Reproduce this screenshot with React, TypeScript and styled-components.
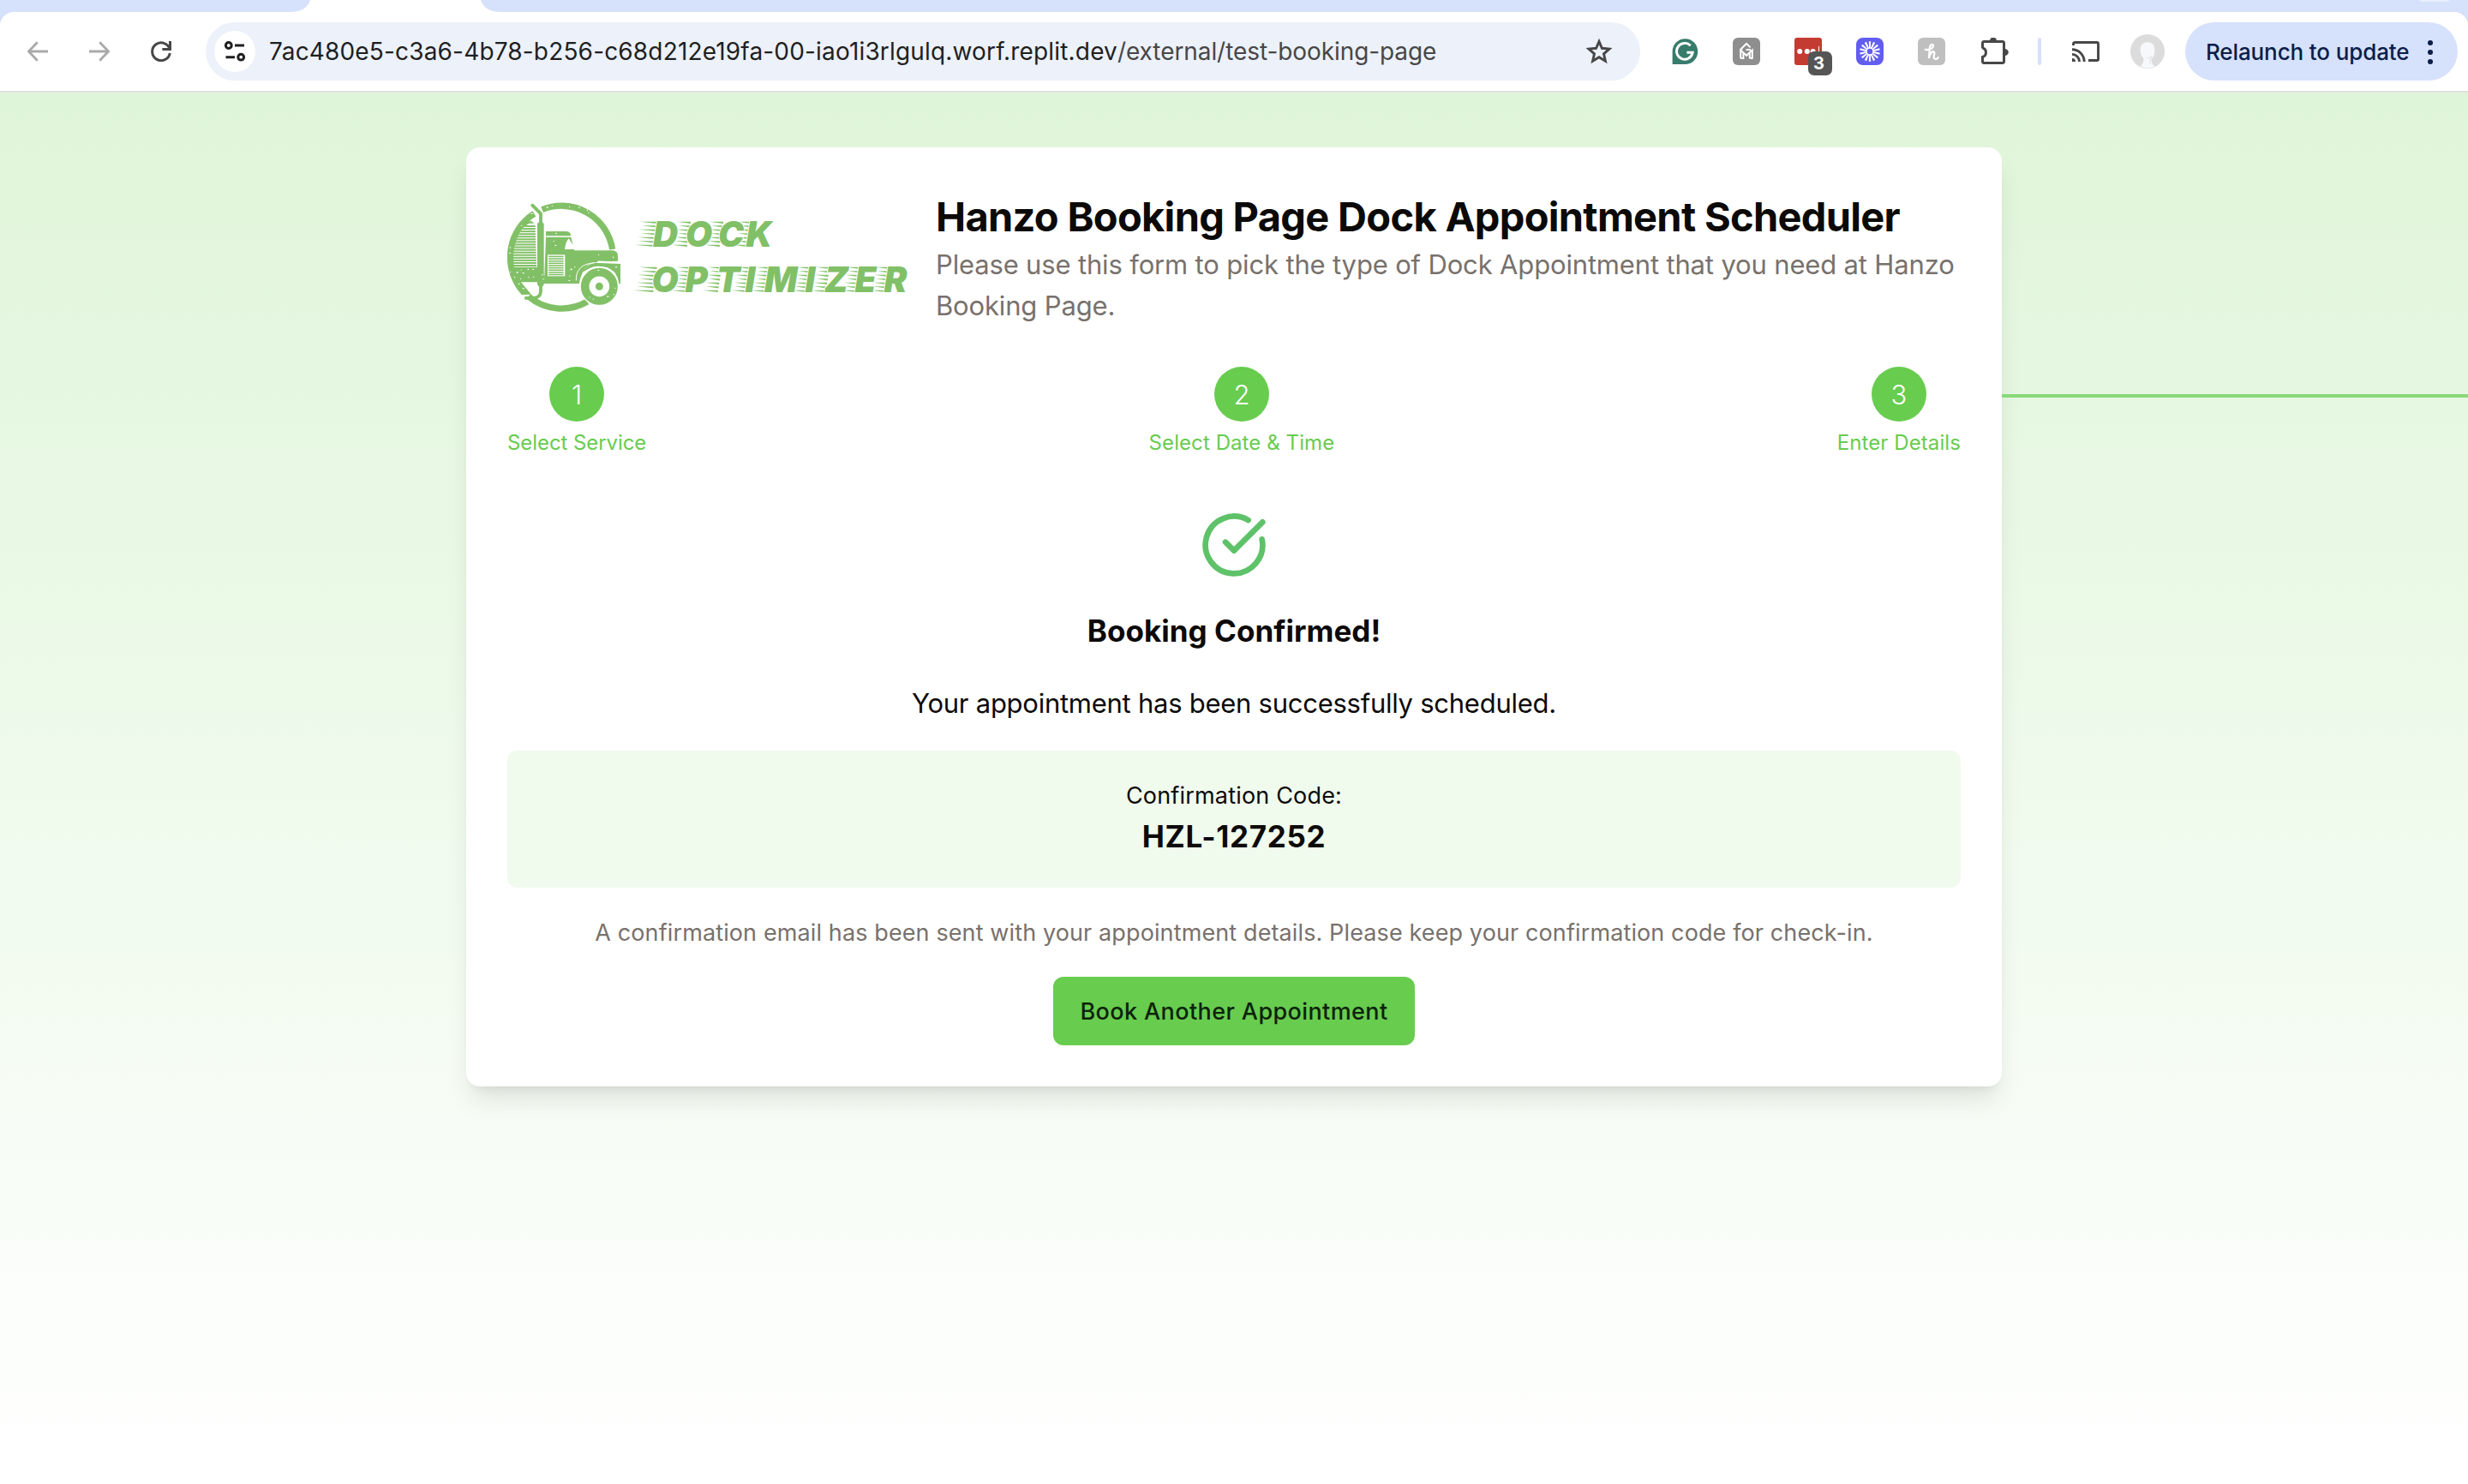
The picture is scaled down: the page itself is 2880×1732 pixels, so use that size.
import React from 'react';
import styled, { createGlobalStyle } from 'styled-components';

const GlobalStyle = createGlobalStyle`
  *, *::before, *::after { box-sizing: border-box; }
  html, body { margin: 0; padding: 0; }
  body { font-family: Inter, "Liberation Sans", sans-serif; background: #fff; }
  h1, h2, p { margin: 0; }
  svg { display: block; flex: none; }
`;

const Window = styled.div`
  width: 2880px;
  height: 1732px;
  display: flex;
  flex-direction: column;
  overflow: hidden;
`;

/* ---------- browser chrome ---------- */

const TabStrip = styled.div`
  height: 14px;
  flex: none;
  display: flex;
  justify-content: space-between;
  background: #d6e1fb;
  padding: 0 22px 0 340px;
`;

const TabSearch = styled.div`
  width: 34px;
  height: 2px;
  border-radius: 0 0 8px 8px;
  background: #e9effd;
`;

const ToolbarFrame = styled.div`
  flex: none;
  background: #d6e1fb;
`;

const Toolbar = styled.div`
  height: 94px;
  display: flex;
  align-items: center;
  background: #fff;
  border-radius: 16px 16px 0 0;
  border-bottom: 2px solid #dfe1df;
  padding: 0 12px 0 32px;
`;

const NavButtons = styled.div`
  display: flex;
  align-items: center;
  gap: 48px;
  width: 208px;
`;

const AddressBar = styled.div`
  width: 1674px;
  height: 68px;
  display: flex;
  align-items: center;
  background: #ecf1fa;
  border-radius: 34px;
  padding: 0 32px 0 10px;
`;

const SiteInfo = styled.div`
  width: 48px;
  height: 48px;
  border-radius: 50%;
  background: #fff;
  display: flex;
  align-items: center;
  justify-content: center;
`;

const Url = styled.div`
  flex: 1;
  margin-left: 16px;
  font-size: 28px;
  line-height: 40px;
  letter-spacing: -0.08px;
  color: #474747;
  white-space: nowrap;
`;

const Host = styled.span`
  color: #1f1f1f;
  letter-spacing: 0.165px;
`;

const Extensions = styled.div`
  display: flex;
  align-items: center;
  gap: 40px;
  margin-left: 36px;
`;

const ExtensionSlot = styled.div`
  position: relative;
  width: 32px;
  height: 32px;

  &:last-child {
    margin-left: 2px;
  }
`;

const CountBadge = styled.span`
  position: absolute;
  left: 16px;
  top: 16px;
  width: 28px;
  height: 28px;
  border-radius: 7px;
  background: #555;
  color: #fff;
  font-size: 20px;
  font-weight: 700;
  line-height: 28px;
  text-align: center;
  padding-right: 3px;
`;

const Divider = styled.div`
  width: 4px;
  height: 32px;
  border-radius: 2px;
  background: #d6e1fb;
  margin: 0 36px 0 34px;
`;

const AvatarSlot = styled.div`
  margin: 0 24px 0 36px;
`;

const RelaunchButton = styled.button`
  width: 318px;
  height: 68px;
  border: 0;
  border-radius: 34px;
  background: #d6e1fb;
  display: flex;
  align-items: center;
  justify-content: space-between;
  padding: 1px 29px 0 24px;
  font: 500 26px/40px Inter, "Liberation Sans", sans-serif;
  letter-spacing: -0.12px;
  color: #0b1d4a;
  white-space: nowrap;
`;

const Dots = styled.span`
  display: grid;
  gap: 5px;
`;

const Dot = styled.span`
  width: 6px;
  height: 6px;
  border-radius: 50%;
  background: #0b1d4a;
`;

/* ---------- page ---------- */

const Page = styled.main`
  position: relative;
  flex: 1;
  display: flex;
  justify-content: center;
  align-items: flex-start;
  padding-top: 64px;
  background: linear-gradient(to bottom, #dff5d9 0%, #ffffff 100%);
`;

const Connector = styled.div`
  position: absolute;
  left: 2336px;
  right: 0;
  top: 352px;
  height: 4px;
  background: #87d978;
`;

const Card = styled.section`
  width: 1792px;
  padding: 48px;
  background: #fff;
  border-radius: 16px;
  box-shadow: 0 20px 30px -6px rgba(0, 0, 0, 0.1), 0 8px 12px -8px rgba(0, 0, 0, 0.1);
  color: #0c0a09;
`;

const Header = styled.header`
  height: 160px;
  display: flex;
  align-items: center;
  gap: 32px;
`;

const HeaderText = styled.div`
  flex: 1;
  padding-top: 2px;
`;

const Title = styled.h1`
  font-size: 47px;
  font-weight: 700;
  line-height: 64px;
  letter-spacing: -0.7px;
  white-space: nowrap;
`;

const Intro = styled.p`
  font-size: 31px;
  line-height: 48px;
  letter-spacing: -0.16px;
  color: #78716c;
`;

const Steps = styled.ol`
  list-style: none;
  margin: 48px 0 63px;
  padding: 0;
  display: flex;
  justify-content: space-between;
`;

const Step = styled.li`
  display: flex;
  flex-direction: column;
  align-items: center;
  gap: 9px;
`;

const StepNumber = styled.span`
  width: 64px;
  height: 64px;
  border-radius: 50%;
  background: #68cc4f;
  color: #fff;
  font-size: 31px;
  font-weight: 300;
  line-height: 65px;
  text-align: center;
`;

const StepLabel = styled.span<{ $tracking: number }>`
  font-size: 24px;
  line-height: 32px;
  letter-spacing: ${(p) => p.$tracking}px;
  color: #68cc4f;
`;

const Confirmation = styled.div`
  display: flex;
  flex-direction: column;
  align-items: center;
  gap: 32px;
`;

const Heading = styled.h2`
  font-size: 35px;
  font-weight: 700;
  line-height: 56px;
  letter-spacing: 0.02px;
`;

const Message = styled.p`
  height: 48px;
  padding-top: 1px;
  font-size: 31px;
  line-height: 48px;
  letter-spacing: -0.26px;
`;

const CodeBox = styled.div`
  align-self: stretch;
  padding: 32px;
  border-radius: 12px;
  background: #f0faed;
  text-align: center;
`;

const CodeLabel = styled.p`
  height: 40px;
  padding-top: 1px;
  font-size: 27px;
  line-height: 40px;
  letter-spacing: 0.18px;
`;

const Code = styled.p`
  font-size: 35px;
  font-weight: 700;
  line-height: 56px;
  letter-spacing: 0.7px;
`;

const Note = styled.p`
  height: 40px;
  padding-top: 1px;
  font-size: 27px;
  line-height: 40px;
  letter-spacing: 0.116px;
  color: #78716c;
`;

const PrimaryButton = styled.button`
  width: 422px;
  height: 80px;
  padding: 2px 0 0;
  border: 0;
  border-radius: 12px;
  background: #68cc4f;
  color: #0d230a;
  font: 500 27px/40px Inter, "Liberation Sans", sans-serif;
  letter-spacing: 0.39px;
  white-space: nowrap;
`;

/* ---------- icons ---------- */

const ArrowIcon = ({ forward = false }: { forward?: boolean }) => (
  <svg width="24" height="24" viewBox="0 0 24 24" fill="none" stroke="#a9a9a9" strokeWidth="2.8">
    <path d={forward ? 'M0 12H22M12.3 1.2L22.6 12 12.3 22.8' : 'M24 12H2M11.7 1.2L1.4 12l10.3 10.8'} />
  </svg>
);

const ReloadIcon = () => (
  <svg width="24" height="24" viewBox="0 0 24 24" fill="none" stroke="#474747" strokeWidth="3">
    <path d="M22 9.2A10.4 10.4 0 1 0 22.3 14" />
    <path d="M22.5 0V9.5H13.4" />
  </svg>
);

const SiteInfoIcon = () => (
  <svg width="24" height="24" viewBox="0 0 24 24" fill="none" stroke="#1f1f1f" strokeWidth="3">
    <circle cx="4.8" cy="5" r="3.4" />
    <path d="M12 5H23M1.5 18.7H12" />
    <circle cx="19.2" cy="18.7" r="3.4" />
  </svg>
);

const StarIcon = () => (
  <svg width="32" height="32" viewBox="0 0 32 32" fill="none" stroke="#474747" strokeWidth="2.9">
    <path d="M16 4.4L19.4 12.3 28 13.1 21.5 18.8 23.4 27.2 16 22.8 8.6 27.2 10.5 18.8 4 13.1 12.6 12.3Z" />
  </svg>
);

const GrammarlyIcon = () => (
  <svg width="32" height="32" viewBox="0 0 32 32">
    <path d="M1.6 31V16A14.8 14.9 0 1 1 16.4 31Z" fill="#377b6b" />
    <path d="M22.7 9.3A9.4 9.4 0 1 0 25.2 17.2H18.4" fill="none" stroke="#fff" strokeWidth="2.9" />
  </svg>
);

const HouseMIcon = () => (
  <svg width="32" height="32" viewBox="0 0 32 32">
    <rect width="32" height="32" rx="6" fill="#8e8e8e" />
    <g fill="none" stroke="#fff" strokeWidth="2">
      <path d="M9.2 24V14.5L16 20.8 22.8 14.5V24H19.6" />
      <path d="M9 24H12.4V18M19.8 18V24" />
      <path d="M10.3 14V12.4L16 7 20.6 11.4M15.5 14H21" />
    </g>
  </svg>
);

const PasswordIcon = () => (
  <svg width="32" height="32" viewBox="0 0 32 32">
    <rect width="32" height="32" rx="3" fill="#c43b31" />
    <g fill="#fff">
      <circle cx="6.2" cy="16" r="3" />
      <circle cx="14.8" cy="16" r="3" />
      <circle cx="21.6" cy="16" r="3" />
      <rect x="28" y="10" width="1" height="8" />
    </g>
  </svg>
);

const BurstIcon = () => (
  <svg width="32" height="32" viewBox="0 0 32 32">
    <rect width="32" height="32" rx="8" fill="#625df0" />
    <g fill="#fff">
      {Array.from({ length: 14 }, (_, i) => (
        <path key={i} d="M15.2 12L14.8 4.2H17.2L16.8 12Z" transform={`rotate(${(i * 360) / 14} 16 16)`} />
      ))}
    </g>
    <circle cx="16" cy="16" r="4" fill="#625df0" stroke="#fff" strokeWidth="1.5" />
  </svg>
);

const HoneyIcon = () => (
  <svg width="32" height="32" viewBox="0 0 32 32">
    <rect width="32" height="32" rx="6" fill="#bfbfbf" />
    <path
      d="M8.8 13.8C12 14.8 17.8 12.6 18 9.6 18 7 14.6 7.4 14 11.2L12.9 24C13.6 19.6 16.4 15.6 18.6 16.4 20.8 17.4 17.6 22 19 24 20.4 25.6 22.6 25 23.8 23.2"
      fill="none"
      stroke="#fff"
      strokeWidth="2.3"
      strokeLinecap="round"
    />
  </svg>
);

const PuzzleIcon = () => (
  <svg width="32" height="32" viewBox="0 0 32 32">
    <path
      d="M1.5 12.4V6A1.5 1.5 0 0 1 3 4.5H25A1.5 1.5 0 0 1 26.5 6V28A1.5 1.5 0 0 1 25 29.5H3A1.5 1.5 0 0 1 1.5 28V22.4A5.4 5.4 0 0 0 1.5 12Z"
      fill="none"
      stroke="#474747"
      strokeWidth="3"
    />
    <path d="M10 4A4 4.2 0 0 1 18 4ZM27.4 13A4.4 4 0 0 1 27.4 21Z" fill="#474747" />
  </svg>
);

const CastIcon = () => (
  <svg width="32" height="24" viewBox="0 0 32 24" fill="none" stroke="#474747" strokeWidth="2.9">
    <path d="M1.5 5V3A1.5 1.5 0 0 1 3 1.5H29A1.5 1.5 0 0 1 30.5 3V21A1.5 1.5 0 0 1 29 22.5H19" />
    <path d="M0 9.8A14.2 14.2 0 0 1 14.2 24M0 15.4A8.6 8.6 0 0 1 8.6 24" />
    <path d="M0 20A4 4 0 0 1 4 24H0Z" fill="#474747" stroke="none" />
  </svg>
);

const AvatarIcon = () => (
  <svg width="40" height="40" viewBox="0 0 40 40">
    <circle cx="20" cy="20" r="20" fill="#dcdcdc" />
    <path
      d="M20 9.2C14 9.2 11.4 13 11.6 18.4 11.8 23 13 26.2 15.4 28 15.8 32 14 35.6 11.6 37.6Q20 41.6 29 37.4C25.6 36.2 24.4 33 24.6 28.4 27.4 26.4 28.4 22.6 28.4 18.4 28.4 12.8 25.8 9.2 20 9.2Z"
      fill="#f6f8fb"
    />
    <path d="M19.5 27.2C22 28.2 24 26.8 24.6 25.2 23.6 28 22.6 32.4 23 34" fill="none" stroke="#e3e6ea" strokeWidth="1.2" />
  </svg>
);

const CheckIcon = () => (
  <svg width="80" height="80" viewBox="0 0 24 24" fill="none" stroke="#5ec269" strokeWidth="2" strokeLinecap="round" strokeLinejoin="round">
    <path d="M21.801 10A10 10 0 1 1 17 3.335" />
    <path d="m9 11 3 3L22 4" />
  </svg>
);

/* ---------- logo ---------- */

const GREEN = '#82c067';
const SQUEEZE = 0.98;

const Wordmark = styled.text`
  font-family: Inter, "Noto Sans", sans-serif;
  font-size: 41px;
  font-weight: 900;
  font-style: italic;
  fill: ${GREEN};
  stroke: #fff;
  stroke-width: 2px;
  paint-order: stroke;
`;

const DOCK_X = [762, 800, 838, 870.5];
const OPTIMIZER_X = [760.5, 799.5, 836, 869.5, 892, 939.5, 962, 997.5, 1031.5];

/* Tapered wind lines trailing each letter of a word */
const SpeedLines = ({ starts, top }: { starts: number[]; top: number }) => (
  <g fill={GREEN}>
    {starts.map((x, i) =>
      Array.from({ length: 7 }, (_, row) => {
        const y = top + row * 4.5;
        const end = x + 6 - row * 0.7;
        const length = (i === 0 ? 21 : 16) + (row % 2) * -3 + (row > 4 ? 2 : 0);
        return <path key={`${i}-${row}`} d={`M${end - length} ${y}L${end} ${y}V${y + 2.3}Z`} />;
      }),
    )}
  </g>
);

const LogoLine = ({ word, starts, baseline }: { word: string; starts: number[]; baseline: number }) => (
  <g>
    <SpeedLines starts={starts} top={baseline - 29.5} />
    <Wordmark transform={`scale(${SQUEEZE} 1)`} x={starts.map((x) => (x / SQUEEZE).toFixed(1)).join(' ')} y={baseline}>
      {word}
    </Wordmark>
  </g>
);

const SPECKS = [
  [176, 66], [193, 61], [254, 64], [288, 66], [316, 76], [321, 85], [122, 88], [86, 130], [46, 207], [45, 226],
  [47, 292], [62, 311], [71, 294], [83, 316], [85, 285], [92, 296], [109, 283], [111, 311], [126, 283], [128, 310],
  [77, 334], [92, 350], [158, 302], [162, 317], [260, 283], [272, 275], [254, 306], [253, 322], [207, 157], [199, 184],
  [205, 199], [356, 232], [407, 241], [355, 286], [413, 349], [409, 371], [388, 378], [337, 387], [324, 381], [417, 275],
];

const Truck = () => (
  <g transform="translate(580 220) scale(0.33333)" fill={GREEN}>
    <g fill="none" stroke={GREEN} strokeWidth="22">
      <path d="M158 74A180 180 0 0 1 404 213" />
      <path d="M316 396A180 180 0 0 1 110 378" />
      <path d="M84 350A180 180 0 0 1 130 88" />
    </g>
    <path d="M94 128Q108 110 122 115L130 122H112L84 142Z" />
    {Array.from({ length: 16 }, (_, i) => {
      const y = 129 + i * 9.2;
      const left = 227 - Math.sqrt(172 * 172 - (240 - y) * (240 - y));
      return <rect key={i} x={left} y={y} width={134 + i * 0.3 - left} height="6" />;
    })}
    <path d="M40 275H142V328H84L120 371 86 372Q48 330 40 275Z" />
    <path d="M141 124Q144 116 152 116 161 116 164 124V336L159 344H147L141 336Z" />
    <path d="M124 59L153 88V122M153 338V362Q150 382 128 383.500H101" fill="none" stroke={GREEN} strokeWidth="11.500" strokeLinecap="round" />
    <path d="M171 150H244Q258 152 259 166H171Z" />
    <path d="M171 170L259 170 266 198 251 175Q240 188 237 213H270V217H406Q423 219 423 236V254L345 258Q300 262 288 333H150V306H166Z" />
    <rect x="177" y="232" width="61" height="75" fill="#fff" />
    {Array.from({ length: 9 }, (_, i) => (
      <rect key={i} x="180" y={236 + i * 7.9} width="53" height="4.6" />
    ))}
    <path d="M303 292C320 276 390 274 414 296L426 333H432V264L345 260Q300 266 291 320L288 333H270V290Z" />
    <path d="M277 322C276 284 296 264 340 260" fill="none" stroke="#fff" strokeWidth="3" />
    <path d="M352 256L434 259" stroke="#fff" strokeWidth="5" />
    <path d="M288 336C290 296 318 272 358 272 400 272 424 298 427 336Z" fill="#fff" />
    <circle cx="358" cy="343" r="69" fill="#fff" />
    <circle cx="358" cy="343" r="50" fill="none" stroke={GREEN} strokeWidth="29" />
    <circle cx="358" cy="343" r="13.500" />
    <g fill="#fff">
      {SPECKS.map(([x, y], i) => (
        <ellipse key={i} cx={x} cy={y} rx={i % 3 === 0 ? 3.6 : 2.2} ry={i % 4 === 0 ? 2.6 : 1.7} />
      ))}
    </g>
  </g>
);

const Logo = () => (
  <svg width="468" height="136" viewBox="592 232 468 136">
    <Truck />
    <LogoLine word="DOCK" starts={DOCK_X} baseline={288.3} />
    <LogoLine word="OPTIMIZER" starts={OPTIMIZER_X} baseline={341.2} />
  </svg>
);

const STEPS = [
  { label: 'Select Service', tracking: -0.08 },
  { label: 'Select Date & Time', tracking: 0.08 },
  { label: 'Enter Details', tracking: 0.1 },
];

export default function App() {
  return (
    <Window>
      <GlobalStyle />
      <TabStrip>
        <svg width="243" height="14" viewBox="0 0 243 14">
          <path d="M0 14C13 13 19 9 22 0H221C224 9 230 13 243 14Z" fill="#fff" />
        </svg>
        <TabSearch />
      </TabStrip>
      <ToolbarFrame>
        <Toolbar>
          <NavButtons>
            <ArrowIcon />
            <ArrowIcon forward />
            <ReloadIcon />
          </NavButtons>
          <AddressBar>
            <SiteInfo>
              <SiteInfoIcon />
            </SiteInfo>
            <Url>
              <Host>7ac480e5-c3a6-4b78-b256-c68d212e19fa-00-iao1i3rlgulq.worf.replit.dev</Host>
              /external/test-booking-page
            </Url>
            <StarIcon />
          </AddressBar>
          <Extensions>
            <ExtensionSlot><GrammarlyIcon /></ExtensionSlot>
            <ExtensionSlot><HouseMIcon /></ExtensionSlot>
            <ExtensionSlot>
              <PasswordIcon />
              <CountBadge>3</CountBadge>
            </ExtensionSlot>
            <ExtensionSlot><BurstIcon /></ExtensionSlot>
            <ExtensionSlot><HoneyIcon /></ExtensionSlot>
            <ExtensionSlot><PuzzleIcon /></ExtensionSlot>
          </Extensions>
          <Divider />
          <CastIcon />
          <AvatarSlot><AvatarIcon /></AvatarSlot>
          <RelaunchButton>
            Relaunch to update
            <Dots>
              <Dot />
              <Dot />
              <Dot />
            </Dots>
          </RelaunchButton>
        </Toolbar>
      </ToolbarFrame>
      <Page>
        <Connector />
        <Card>
          <Header>
            <Logo />
            <HeaderText>
              <Title>Hanzo Booking Page Dock Appointment Scheduler</Title>
              <Intro>
                Please use this form to pick the type of Dock Appointment that you need at Hanzo Booking Page.
              </Intro>
            </HeaderText>
          </Header>
          <Steps>
            {STEPS.map(({ label, tracking }, i) => (
              <Step key={label}>
                <StepNumber>{i + 1}</StepNumber>
                <StepLabel $tracking={tracking}>{label}</StepLabel>
              </Step>
            ))}
          </Steps>
          <Confirmation>
            <CheckIcon />
            <Heading>Booking Confirmed!</Heading>
            <Message>Your appointment has been successfully scheduled.</Message>
            <CodeBox>
              <CodeLabel>Confirmation Code:</CodeLabel>
              <Code>HZL-127252</Code>
            </CodeBox>
            <Note>
              A confirmation email has been sent with your appointment details. Please keep your confirmation code for
              check-in.
            </Note>
            <PrimaryButton>Book Another Appointment</PrimaryButton>
          </Confirmation>
        </Card>
      </Page>
    </Window>
  );
}
